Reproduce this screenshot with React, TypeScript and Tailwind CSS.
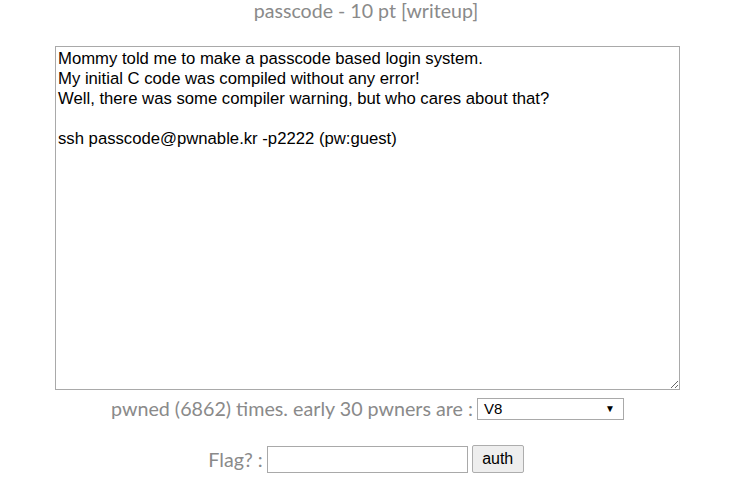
import React from 'react';

const desc = `Mommy told me to make a passcode based login system.
My initial C code was compiled without any error!
Well, there was some compiler warning, but who cares about that?

ssh passcode@pwnable.kr -p2222 (pw:guest)`;

export default function App() {
  return (
    <div className="w-[732px] h-[484px] bg-white flex flex-col items-center text-[#8a8a8a] font-['Lato',sans-serif] overflow-hidden">
      <h1 className="text-[19.6px] leading-[22px] mt-0">passcode - 10 pt [writeup]</h1>

      <textarea
        readOnly
        defaultValue={desc}
        className="mt-[24px] w-[625px] h-[344px] border border-[#a9a9a9] px-[2px] py-[2px] text-[16.7px] leading-[20px] text-black font-['Liberation_Sans',Arial,sans-serif] resize-y outline-none ml-[3px]"
      />

      <div className="flex items-center mt-[4px] text-[19.7px] ml-[3px]">
        <span>pwned (6862) times. early 30 pwners are :</span>
        <div className="ml-[4px] w-[147px] h-[22px] border border-[#a9a9a9] flex items-center justify-between pl-[6px] pr-[4px] text-black text-[15px] font-['Liberation_Sans',Arial,sans-serif]">
          <span>V8</span>
          <span className="text-[10px] mr-[4px]">▼</span>
        </div>
      </div>

      <div className="flex items-center mt-[21px] text-[19.7px]">
        <span>Flag? :</span>
        <input className="ml-[4px] w-[201px] h-[27px] border border-[#a9a9a9] outline-none" />
        <button className="ml-[4px] w-[52px] h-[28px] border border-[#adadad] rounded-[2px] bg-[#eeeeee] text-black text-[16px] font-['Liberation_Sans',Arial,sans-serif]">
          auth
        </button>
      </div>
    </div>
  );
}
